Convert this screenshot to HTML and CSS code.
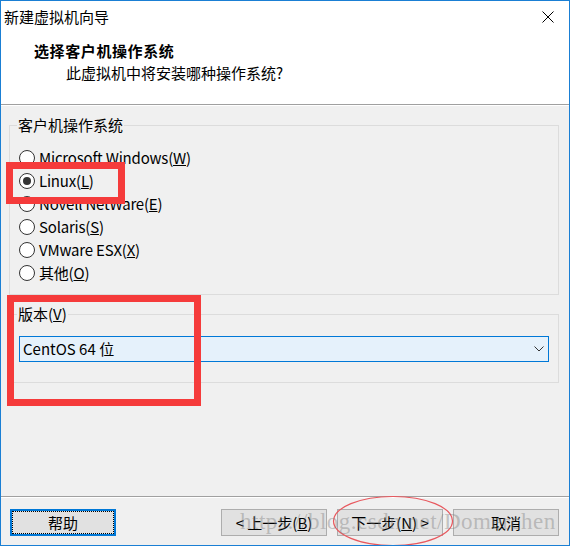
FILE: index.html
```html
<!DOCTYPE html>
<html>
<head>
    <link rel="stylesheet" href="styles.css">
</head>
<body>
    <div class="window">
        <div class="titlebar">
            <span class="title">新建虚拟机向导</span>
            <svg class="close" width="12" height="12" viewBox="0 0 12 12" stroke="#000" stroke-width="1">
                <line x1="0.5" y1="0.5" x2="11.5" y2="11.5"></line>
                <line x1="11.5" y1="0.5" x2="0.5" y2="11.5"></line>
            </svg>
        </div>
        <div class="header">
            <h1>选择客户机操作系统</h1>
            <p>此虚拟机中将安装哪种操作系统?</p>
        </div>

        <div class="content">
            <fieldset class="group os-group">
                <legend>客户机操作系统</legend>
                <div class="radio"><span class="dot"></span>Microsoft Windows(<u>W</u>)</div>
                <div class="radio checked"><span class="dot"></span>Linux(<u>L</u>)</div>
                <div class="radio"><span class="dot"></span>Novell NetWare(<u>E</u>)</div>
                <div class="radio"><span class="dot"></span>Solaris(<u>S</u>)</div>
                <div class="radio"><span class="dot"></span>VMware ESX(<u>X</u>)</div>
                <div class="radio"><span class="dot"></span>其他(<u>O</u>)</div>
            </fieldset>

            <fieldset class="group version-group">
                <legend>版本(<u>V</u>)</legend>
                <div class="select">
                    <span>CentOS 64 位</span>
                    <svg width="10" height="6" viewBox="0 0 10 6" fill="none" stroke="#333" stroke-width="1">
                        <polyline points="0.5,0.5 5,5 9.5,0.5"></polyline>
                    </svg>
                </div>
            </fieldset>
        </div>

        <div class="footer">
            <button class="btn help">帮助</button>
            <div class="nav">
                <button class="btn">&lt; 上一步(<u>B</u>)</button>
                <button class="btn">下一步(<u>N</u>) &gt;</button>
            </div>
            <button class="btn">取消</button>
        </div>

        <!-- annotations drawn over the screenshot -->
        <div class="mark mark-linux"></div>
        <div class="mark mark-version"></div>
        <svg class="mark-next" width="124" height="52" viewBox="0 0 124 52">
            <ellipse cx="62" cy="26" rx="59.5" ry="24.5" fill="none" stroke="#e8585e" stroke-width="1.2"></ellipse>
        </svg>
        <div class="watermark">https://blog.csdn.net/Domerchen</div>
    </div>
</body>
</html>
```

FILE: styles.css
```css
* {
    margin: 0;
    padding: 0;
    box-sizing: border-box;
}

body {
    background: #fff;
}

.window {
    position: relative;
    width: 570px;
    height: 546px;
    border: 1px solid #1a7fd4;
    background: #f0f0f0;
    display: flex;
    flex-direction: column;
    overflow: hidden;
    font-family: "Noto Sans CJK SC", "Noto Sans", sans-serif;
    font-size: 15px;
    color: #000;
}

.titlebar {
    height: 32px;
    background: #fff;
    display: flex;
    align-items: center;
    justify-content: space-between;
    padding: 0 15px 0 3px;
    line-height: 20px;
}

.header {
    height: 72px;
    background: #fff;
    padding: 8px 0 0 33px;
    border-bottom: 1px solid #a0a0a0;
    box-shadow: 0 1px #fff;
}

.header h1 {
    font-size: 15px;
    font-weight: bold;
    line-height: 20px;
    letter-spacing: 0.6px;
}

.header p {
    line-height: 20px;
    margin: 2px 0 0 32px;
}

.content {
    padding: 0 10px 0 8px;
}

.group {
    border: 1px solid #dcdcdc;
    padding: 0 9px;
    min-width: 0;
}

.group legend {
    line-height: 20px;
    padding: 0 1px;
    margin-left: -2px;
}

.os-group {
    margin-top: 10px;
    padding-top: 11px;
    padding-bottom: 10px;
}

.radio {
    height: 23px;
    display: flex;
    align-items: center;
    line-height: 20px;
    letter-spacing: -0.2px;
}

.dot {
    width: 16px;
    height: 16px;
    border: 1px solid #333;
    border-radius: 50%;
    background: #fff;
    margin-right: 4px;
    display: flex;
    align-items: center;
    justify-content: center;
}

.checked .dot::after {
    content: "";
    width: 8px;
    height: 8px;
    border-radius: 50%;
    background: #333;
}

.version-group {
    margin-top: 9px;
    padding-top: 12px;
    padding-bottom: 20px;
}

.select {
    height: 26px;
    border: 1px solid #0078d7;
    background: #e5f1fb;
    display: flex;
    align-items: center;
    justify-content: space-between;
    padding: 0 4px 0 3px;
    line-height: 20px;
}

.footer {
    margin-top: auto;
    height: 49px;
    border-top: 1px solid #a0a0a0;
    box-shadow: inset 0 1px #fff;
    padding: 12px 10px 9px 9px;
    display: flex;
    align-items: flex-start;
    gap: 10px;
}

.nav {
    margin-left: auto;
    display: flex;
    gap: 10px;
}

.btn {
    width: 106px;
    height: 27px;
    border: 1px solid #adadad;
    background: #e1e1e1;
    font-family: inherit;
    font-size: 15px;
    line-height: 20px;
    color: #000;
}

.help {
    border: 2px solid #0078d7;
    outline: 1px dotted #000;
    outline-offset: -3px;
}

.mark {
    position: absolute;
    border: 7px solid #f53b3b;
}

.mark-linux {
    left: 5px;
    top: 161px;
    width: 119px;
    height: 42px;
}

.mark-version {
    left: 6px;
    top: 294px;
    width: 194px;
    height: 111px;
}

.mark-next {
    position: absolute;
    left: 330px;
    top: 494px;
}

.watermark {
    position: absolute;
    left: 239px;
    top: 506px;
    font-family: "Liberation Serif", serif;
    font-size: 23px;
    line-height: 30px;
    letter-spacing: 0.5px;
    color: rgba(120, 120, 120, 0.4);
    white-space: nowrap;
}
```
